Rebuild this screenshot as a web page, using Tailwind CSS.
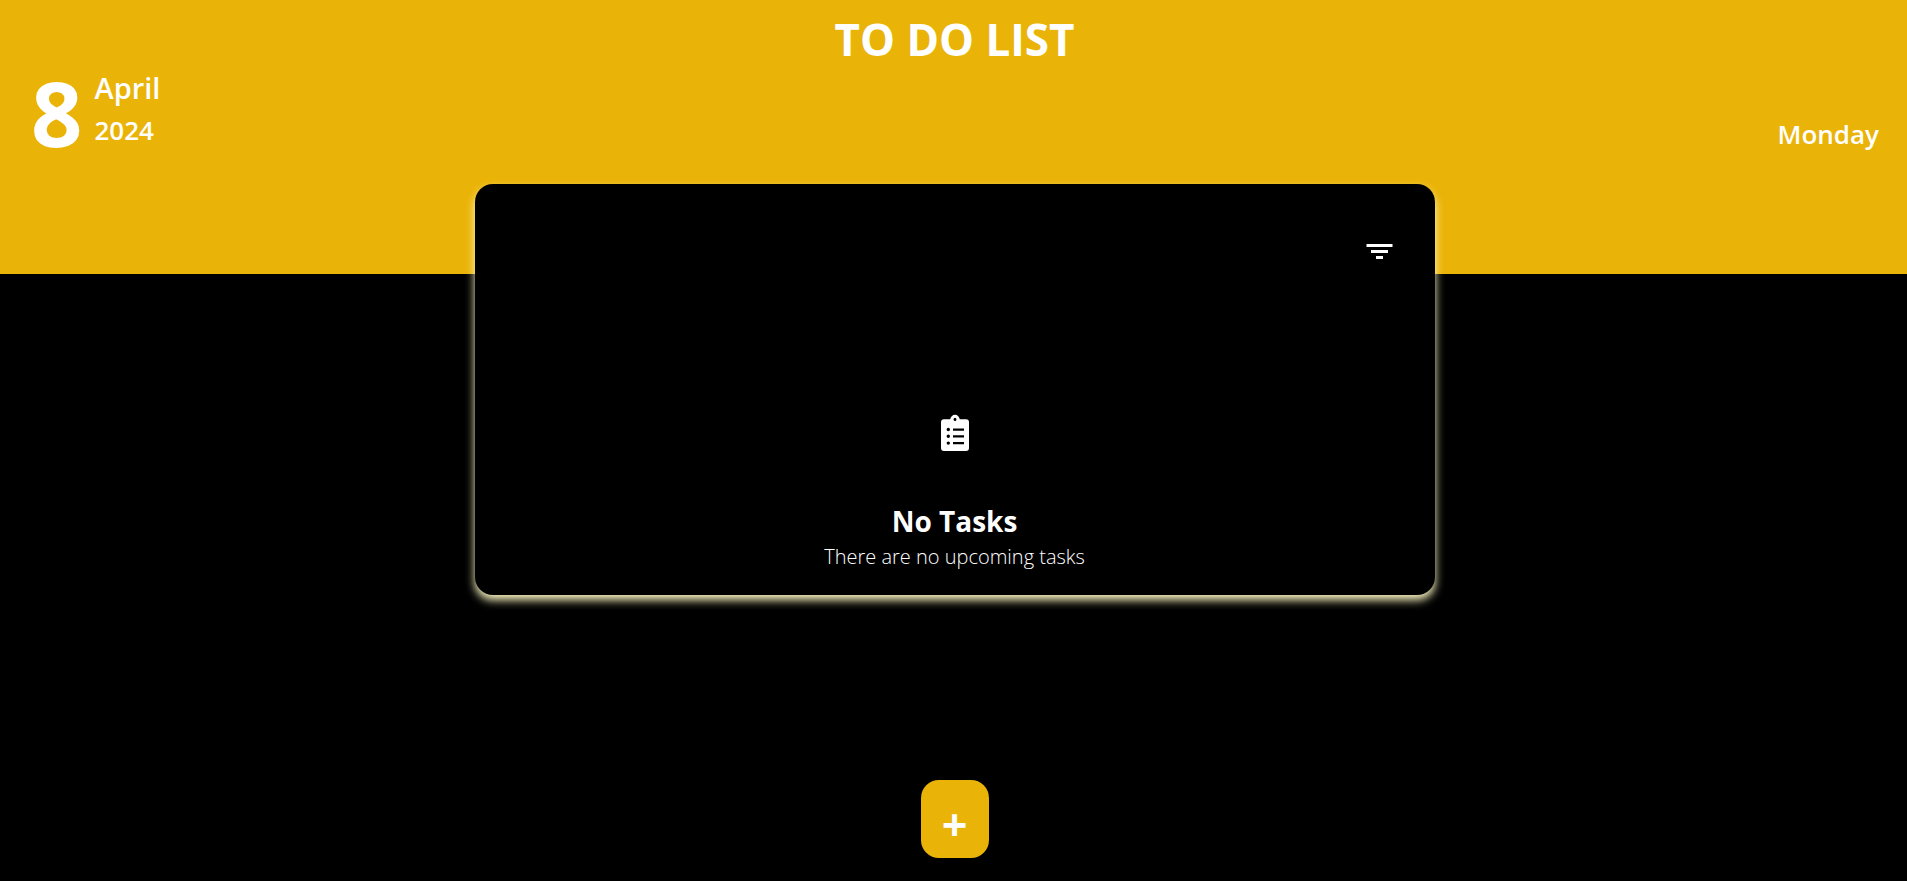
<!DOCTYPE html>
<html lang="en">
<head>
<meta charset="utf-8">
<meta name="viewport" content="width=device-width, initial-scale=1">
<title>To Do List</title>
<script src="https://cdn.jsdelivr.net/npm/@tailwindcss/browser@4"></script>
</head>
<body class="flex min-h-screen flex-col bg-black font-['Segoe_UI','Open_Sans',sans-serif] text-white">
  <header class="h-[274px] bg-[#eab308] px-7 pt-2">
    <h1 class="pl-0.5 text-center text-[44px] leading-[62px] font-bold">TO DO LIST</h1>
    <div class="flex items-start justify-between">
      <div class="flex gap-3">
        <span class="pl-[3px] text-[90px] leading-[84px] font-bold">8</span>
        <div class="font-semibold">
          <p class="text-[29px] leading-9">April</p>
          <p class="pt-1 text-[26px] leading-10">2024</p>
        </div>
      </div>
      <p class="pt-11 text-[26px] leading-10 font-semibold">Monday</p>
    </div>
  </header>
  <main class="relative -mt-[90px] ml-0.5 flex w-[960px] max-w-full flex-col self-center rounded-[18px] bg-black px-10 pt-[49px] pb-[23px] shadow-[0_5px_10px_#fef9c3]">
    <button type="button" aria-label="Filter tasks" class="self-end">
      <svg class="h-9 w-[30px]" viewBox="0 0 30 36" fill="currentColor" aria-hidden="true">
        <path d="M1.500 11h26v3h-26zM6 17h17v3H6zM11 23h7v3h-7z"/>
      </svg>
    </button>
    <section class="flex flex-col items-center pt-[144px]">
      <svg class="h-10 w-10" viewBox="0 0 40 40" fill="currentColor" fill-rule="evenodd" aria-hidden="true">
        <path d="M9 6.300H15.500A4.600 4.600 0 0 1 24.500 6.300H31Q34 6.300 34 9.300V35Q34 38 31 38H9Q6 38 6 35V9.300Q6 6.300 9 6.300ZM20 4.800a1.600 1.600 0 1 0 0 3.200a1.600 1.600 0 1 0 0-3.200ZM13.300 14.800a1.700 1.700 0 1 0 0 3.400a1.700 1.700 0 1 0 0-3.400ZM13.300 21.600a1.700 1.700 0 1 0 0 3.400a1.700 1.700 0 1 0 0-3.400ZM13.300 28.400a1.700 1.700 0 1 0 0 3.400a1.700 1.700 0 1 0 0-3.400ZM18 15.500h11v2.200H18ZM18 22.200h11v2.200H18ZM18 29h11v2.200H18Z"/>
        <circle cx="20" cy="6.400" r="3.200" fill="none" stroke="currentColor" stroke-width="2.800"/>
      </svg>
      <h2 class="pt-12 text-[28px] leading-10 font-bold">No Tasks</h2>
      <p class="pt-px text-[20px] leading-[30px] font-light">There are no upcoming tasks</p>
    </section>
  </main>
  <button type="button" aria-label="Add task" class="mt-auto mb-[23px] ml-0.5 flex h-[78px] w-[68px] items-center justify-center self-center rounded-[18px] bg-[#eab308] pt-2 text-[45px] leading-none font-bold">+</button>
</body>
</html>
